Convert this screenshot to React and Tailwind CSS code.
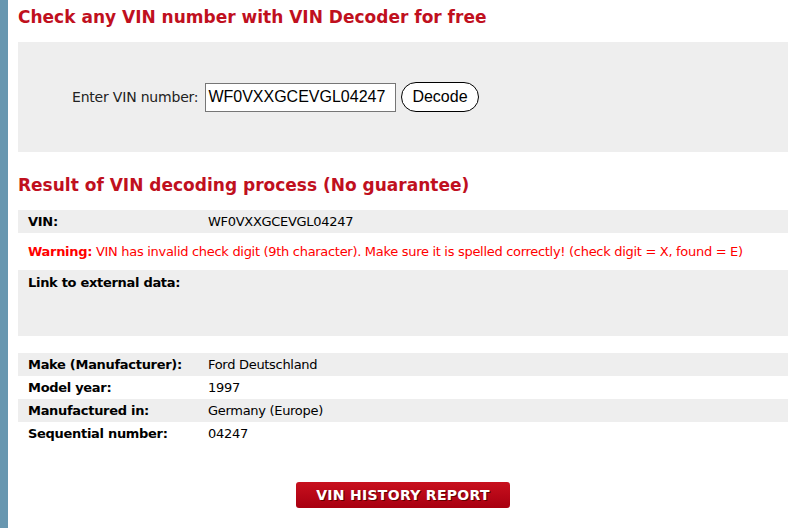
export default function App() {
  const rows = [
    ["Make (Manufacturer):", "Ford Deutschland"],
    ["Model year:", "1997"],
    ["Manufactured in:", "Germany (Europe)"],
    ["Sequential number:", "04247"],
  ];

  return (
    <div className="flex min-h-[528px] bg-white text-black" style={{ fontFamily: '"DejaVu Sans", Verdana, sans-serif' }}>
      {/* left strip */}
      <div className="w-2 shrink-0 bg-[#6897b0]" />

      <main className="flex-1 pl-[10px] pr-[2px]">
        <h1 className="pt-[6px] text-[17px] font-bold leading-[22px] text-[#c0101e]">
          Check any VIN number with VIN Decoder for free
        </h1>

        {/* search box */}
        <div className="mt-[14px] flex h-[110px] items-center bg-[#eeeeee] pl-[54px]">
          <label className="text-[14px] tracking-[-0.2px] text-[#222]">Enter VIN number:</label>
          <input
            readOnly
            value="WF0VXXGCEVGL04247"
            className="ml-[7px] h-[29px] w-[191px] border border-[#767676] bg-white px-[2px] text-[16px] text-black outline-none"
            style={{ fontFamily: '"Liberation Sans", Arial, sans-serif' }}
          />
          <button
            className="ml-[5px] h-[30px] rounded-full border border-black bg-white px-[10px] text-[16px] text-black"
            style={{ fontFamily: '"Liberation Sans", Arial, sans-serif' }}
          >
            Decode
          </button>
        </div>

        <h2 className="mt-[22px] text-[17px] font-bold leading-[22px] text-[#c0101e]">
          Result of VIN decoding process (No guarantee)
        </h2>

        {/* results */}
        <div className="mt-[14px] text-[13px] tracking-[-0.3px]">
          <div className="flex h-[23px] items-center bg-[#eeeeee] px-[10px]">
            <span className="w-[180px] font-bold">VIN:</span>
            <span>WF0VXXGCEVGL04247</span>
          </div>
          <div className="flex h-[37px] items-center px-[10px] text-[#ff0000]">
            <span>
              <b>Warning:</b> VIN has invalid check digit (9th character). Make sure it is spelled correctly! (check digit = X, found = E)
            </span>
          </div>
          <div className="h-[66px] bg-[#eeeeee] px-[10px] pt-[3px] font-bold">Link to external data:</div>

          <div className="mt-[17px]">
            {rows.map(([k, v], i) => (
              <div key={k} className={`flex h-[23px] items-center px-[10px] ${i % 2 === 0 ? "bg-[#eeeeee]" : ""}`}>
                <span className="w-[180px] font-bold">{k}</span>
                <span>{v}</span>
              </div>
            ))}
          </div>
        </div>

        <div className="mt-[37px] flex justify-center">
          <button className="h-[26px] w-[214px] rounded-[3px] bg-gradient-to-b from-[#c8101e] to-[#a80010] text-[14px] font-bold tracking-[0.3px] text-white [text-shadow:1px_1px_0_#600]">
            VIN HISTORY REPORT
          </button>
        </div>
      </main>
    </div>
  );
}
